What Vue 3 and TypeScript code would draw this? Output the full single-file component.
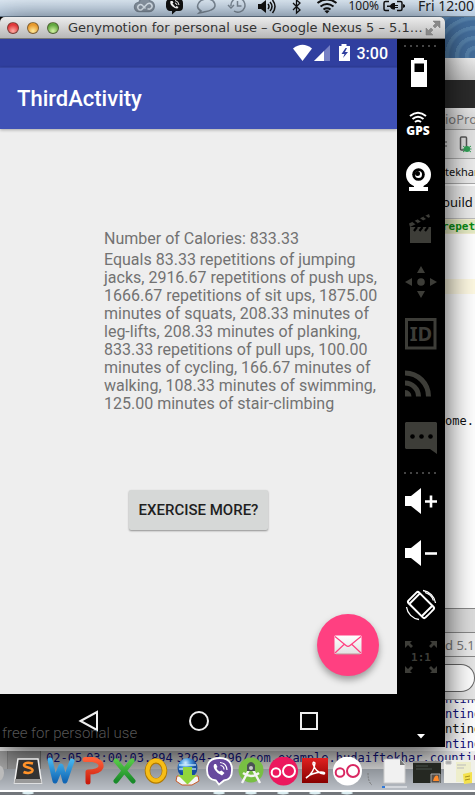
<script setup lang="ts">
interface LogRow {
  text: string
  tone: 'navy' | 'ink'
}

const calories = '833.33'
const summary: string[] = [
  'Equals 83.33 repetitions of jumping',
  'jacks, 2916.67 repetitions of push ups,',
  '1666.67 repetitions of sit ups, 1875.00',
  'minutes of squats, 208.33 minutes of',
  'leg-lifts, 208.33 minutes of planking,',
  '833.33 repetitions of pull ups, 100.00',
  'minutes of cycling, 166.67 minutes of',
  'walking, 108.33 minutes of swimming,',
  '125.00 minutes of stair-climbing',
]
const logRows: LogRow[] = [
  { text: 'nting', tone: 'navy' },
  { text: 'nting', tone: 'navy' },
  { text: 'nting', tone: 'ink' },
  { text: 'nting', tone: 'navy' },
]
</script>

<template>
  <div class="desktop">
    <!-- Editor window in the background -->
    <section class="ide">
      <div class="row back-title"></div>
      <div class="row back-dark"></div>
      <div class="row ide-title">ioPro</div>
      <div class="row ide-tools">
        <svg width="30" height="28" viewBox="0 0 30 28">
          <path d="M0 12h2M0 16h2" stroke="#999" stroke-width="2" />
          <rect x="15.500" y="7" width="6" height="13" rx="1" fill="#ddd" stroke="#555" stroke-width="1.500" />
          <circle cx="22" cy="19" r="3" fill="#2f9e54" />
          <path d="M18 16l8 6M18 22l8-6M17.500 19h9" stroke="#2f9e54" />
        </svg>
      </div>
      <div class="row ide-crumb">tekhar</div>
      <div class="row ide-tab">build</div>
      <div class="row ide-code"><span class="found">repet</span></div>
      <div class="row ide-blank"></div>
      <div class="row ide-caret"></div>
      <div class="row ide-editor">ome.</div>
      <div class="row ide-bar"></div>
      <div class="row ide-device">d 5.1</div>
      <div class="row ide-search"><span class="search-end"></span></div>
      <div class="log">
        <div class="log-rows">
          <div v-for="(row, i) in logRows" :key="i" class="row log-row" :class="row.tone">{{ row.text }}</div>
        </div>
        <div class="log-full">
          <span>02-05</span><span>03:00:03.894</span><span>3264-3296/com.example.hudaiftekhar.counting</span>
        </div>
      </div>
    </section>

    <header class="menubar">
      <svg class="menu-icons" width="212" height="16" viewBox="134 0 212 16">
        <g fill="none" stroke="#7a8794">
          <path d="M140 11.500a4.500 4.500 0 0 1 0-9 6 6 0 0 1 11-1.500 5.300 5.300 0 0 1-1 10.500z" stroke-width="1.500" fill="#8995a2" />
          <path d="M146.500 8.500l-3-3a2.700 2.700 0 1 0-1 4.300l6-6a2.900 2.900 0 1 1 0 4.800" stroke="#dce6ef" stroke-width="1.500" />
          <path d="M202 11c-7-4-2-12 6-12s11 8 4 11c-3 2-6 1-7 2l-5 1z" stroke-width="1.500" />
          <path d="M232 6a7 7 0 1 1 3 5M229 5l3 3 3-3M238.500 1v5h4" stroke-width="1.500" />
        </g>
        <path d="M170-1h10q4 0 4 4v4q0 4-4 4h-3l-4 3.500V11h-2q-3 0-4-4V3q0-3 3-4z" fill="#111" />
        <path d="M171.500 1q-1 3 2 5.500t5 2l1-1.500-2-1-1 1-3-3.500 1-1-1-1.500z" fill="#fff" />
        <path d="M176 .5q3.500.5 4 4.500M176 3q1.500 0 2 2" fill="none" stroke="#fff" />
        <path d="M259 4h3l5-4v13l-5-4h-3z" fill="#111" />
        <path d="M269 4q2 2.500 0 5M271 2q4 4.500 0 9M273.500 0q5 6.500 0 13" fill="none" stroke="#111" stroke-width="1.500" />
        <path d="M294 3l7 7-3.500 3V0l3.500 3-7 7" fill="none" stroke="#111" stroke-width="1.300" />
        <path d="M318.500 3q9.500-7 19 0M321.500 6.500q6.500-5 13 0M324.500 9.500q3.500-2.500 7 0" fill="none" stroke="#111" stroke-width="2" />
        <path d="M325.500 11l2.500 2.500 2.500-2.500q-2.500-1.500-5 0z" fill="#111" />
      </svg>
      <span class="percent">100%</span>
      <svg width="23" height="16" viewBox="0 0 23 16">
        <path d="M6 1.500H2.500q-1.500 0-1.500 1.500v6q0 1.500 1.500 1.500H6M14 1.500h3.500Q19 1.500 19 3v6q0 1.500-1.500 1.500H14" fill="none" stroke="#111" stroke-width="1.500" />
        <path d="M20 4l2 1v2l-2 1zM4 5.500h3q1-2 3-2.500h2v2h3v1h-3v1h3v1h-3v1.500h-2Q8 9 7 7H4z" fill="#111" />
      </svg>
      <time class="clock">Fri 12:00</time>
    </header>

    <main class="emulator">
      <div class="titlebar">
        <span class="lights"><i class="light red"></i><i class="light amber"></i><i class="light green"></i></span>
        <h1 class="window-title">Genymotion for personal use – Google Nexus 5 – 5.1…</h1>
        <svg width="16" height="16" viewBox="0 0 16 16">
          <path d="M8 1h7v7l-2.500-2.500-2.500 2.500L8 6l2.500-2.500zM8 15H1V8l2.500 2.500L6 8l2 2-2.500 2.500z" fill="#888" stroke="#777" stroke-width=".5" />
        </svg>
      </div>

      <div class="window-body">
        <div class="phone">
          <div class="statusbar">
            <svg width="60" height="18" viewBox="0 0 60 18">
              <path d="M0 4.500Q9.500-3 19 4.500L9.500 17z" fill="#fff" />
              <path d="M37 1v16H21z" fill="#7680c4" />
              <path d="M31 7v10H21z" fill="#fff" />
              <path d="M48.500 0h5v2H57v15H46V2h2.500z" fill="#fff" />
              <path d="M52.500 4l-4 6h3l-1.500 4 5-6h-3l2-4z" fill="#303f9f" />
            </svg>
            <span>3:00</span>
          </div>
          <div class="appbar"><h2>ThirdActivity</h2></div>
          <div class="content">
            <div class="result">
              <p class="total">Number of Calories: {{ calories }}</p>
              <p><template v-for="(line, i) in summary" :key="i">{{ line }}<br></template></p>
            </div>
            <button type="button" class="more">EXERCISE MORE?</button>
            <button type="button" class="fab" aria-label="Mail">
              <svg width="28" height="20" viewBox="0 0 28 20">
                <defs>
                  <linearGradient id="paper" x1="0" y1="0" x2="0" y2="1">
                    <stop offset="0" stop-color="#fff" /><stop offset="1" stop-color="#e2e2e2" />
                  </linearGradient>
                </defs>
                <rect x=".5" y=".5" width="27" height="18.500" rx="1" fill="url(#paper)" />
                <path d="M1 1.500L12 10.500q2 1.600 4 0L27 1.500M1 18l9-8.500M27 18l-9-8.500" fill="none" stroke="#ff4081" stroke-width="1.200" />
                <path d="M2 19h24" stroke="#b99" />
              </svg>
            </button>
          </div>
        </div>

        <nav class="tools">
          <div class="dots top"></div>
          <button type="button" aria-label="Battery">
            <svg viewBox="0 0 48 52"><path d="M17 11h10v2h3v27H14V13h3z" fill="#fff" /><path d="M17.500 16.500H27V25h-9.500z" fill="#000" /></svg>
          </button>
          <button type="button" aria-label="Location">
            <svg viewBox="0 0 48 52">
              <path d="M13 17q8-6.500 16 0M15.500 20q5.500-4.500 11 0M18 23q3-2.500 6 0" fill="none" stroke="#fff" stroke-width="2" />
              <text x="21" y="36" text-anchor="middle" class="gps">GPS</text>
            </svg>
          </button>
          <button type="button" aria-label="Camera">
            <svg viewBox="0 0 48 52">
              <path d="M17 33h9.500v3H31v4H12v-4h5z" fill="#fff" />
              <circle cx="21.500" cy="23.500" r="12.500" fill="#fff" /><circle cx="21.500" cy="23.500" r="6.300" fill="#000" />
              <circle cx="21.500" cy="23.500" r="3.500" fill="#fff" /><circle cx="20.500" cy="22.500" r="2.500" fill="#000" />
            </svg>
          </button>
          <button type="button" aria-label="Record">
            <svg viewBox="0 0 48 52" fill="#3d3d38">
              <path d="M13 24h21v16H13zM12 20.500l20-9.500 1 3-20 10z" />
              <path d="M16 18l4 3M21.500 15.500l4 3M27 13l4 3M17 28l3-4M22.500 28l3-4M28 28l3-4" stroke="#000" stroke-width="2.200" />
            </svg>
          </button>
          <button type="button" aria-label="Move">
            <svg viewBox="0 0 48 52" fill="#3d3d38">
              <circle cx="24" cy="27" r="3.800" /><path d="M24 11l4 7h-8zM24 43l4-7h-8zM8 27l7-4v8zM40 27l-7-4v8z" />
            </svg>
          </button>
          <button type="button" aria-label="Identifiers">
            <svg viewBox="0 0 48 52">
              <rect x="9.500" y="12.500" width="28.500" height="28.500" fill="none" stroke="#3d3d38" stroke-width="3" />
              <text x="24" y="34" text-anchor="middle" class="ident">ID</text>
            </svg>
          </button>
          <button type="button" aria-label="Network">
            <svg viewBox="0 0 48 52">
              <path d="M8 31q6 .5 6.500 6.500H8z" fill="#3d3d38" />
              <path d="M8 24a13.500 13.500 0 0 1 13.500 13.500M8 14a23.500 23.500 0 0 1 23.500 23.500" fill="none" stroke="#3d3d38" stroke-width="5" />
            </svg>
          </button>
          <button type="button" aria-label="Messages">
            <svg viewBox="0 0 48 52">
              <path d="M9 11h30l1 1v31l-7-5H9l-1-1V12z" fill="#3d3d38" />
              <g fill="#000"><circle cx="15.500" cy="25.500" r="2.300" /><circle cx="24.500" cy="25.500" r="2.300" /><circle cx="33.500" cy="25.500" r="2.300" /></g>
            </svg>
          </button>
          <div class="dots"></div>
          <button type="button" aria-label="Volume up">
            <svg viewBox="0 0 48 52"><path d="M8 21h6l10-8v26l-10-8H8z" fill="#fff" /><path d="M28 26.500h12M34 20.500v12" stroke="#fff" stroke-width="2.600" /></svg>
          </button>
          <button type="button" aria-label="Volume down">
            <svg viewBox="0 0 48 52"><path d="M8 21h6l10-8v26l-10-8H8z" fill="#fff" /><path d="M28 26.500h12" stroke="#fff" stroke-width="2.600" /></svg>
          </button>
          <button type="button" aria-label="Rotate">
            <svg viewBox="0 0 48 52" fill="none" stroke="#fff">
              <g transform="rotate(-45 24 26)">
                <rect x="16.500" y="14" width="15" height="24" rx="2" stroke-width="2" />
                <path d="M16.500 17h15M16.500 34.500h15" stroke-width="2" /><path d="M21 36.500h6" stroke="#000" />
              </g>
              <path d="M26 11.500A14.500 14.500 0 0 1 38.500 24M28 13.500a13 13 0 0 1 8.500 8M22 40.500A14.500 14.500 0 0 1 9.500 28" stroke-width="1.300" />
            </svg>
          </button>
          <button type="button" aria-label="Pixel perfect">
            <svg viewBox="0 0 48 52" fill="#3d3d38">
              <path d="M8 10h7l-2 2 3 3-2 2-3-3-3 3zM40 10h-7l2 2-3 3 2 2 3-3 3 3zM8 42h7l-2-2 3-3-2-2-3 3-3-3zM40 42h-7l2-2-3-3 2-2 3 3 3-3z" />
              <text x="24" y="30" text-anchor="middle" class="ratio">1:1</text>
            </svg>
          </button>
        </nav>
      </div>

      <footer class="navbar">
        <div class="keys">
          <button type="button" aria-label="Back"><svg viewBox="0 0 24 24"><path d="M3.500 12L20 3v18z" /></svg></button>
          <button type="button" aria-label="Home"><svg viewBox="0 0 24 24"><circle cx="12" cy="12" r="9" /></svg></button>
          <button type="button" aria-label="Recents"><svg viewBox="0 0 24 24"><path d="M4 4h16v16H4z" /></svg></button>
        </div>
        <span class="watermark">free for personal use</span>
        <span class="more-arrow"><svg width="8" height="5" viewBox="0 0 8 5"><path d="M0 0h8L4 4.500z" fill="#fff" /></svg></span>
      </footer>
    </main>

    <footer class="dock">
      <svg class="dock-icons" width="475" height="38" viewBox="0 0 475 38">
        <defs>
          <linearGradient id="blue" x1="0" y1="0" x2="0" y2="1"><stop offset="0" stop-color="#45b5ef" /><stop offset="1" stop-color="#1267b5" /></linearGradient>
          <linearGradient id="red" x1="0" y1="0" x2="0" y2="1"><stop offset="0" stop-color="#ff6038" /><stop offset="1" stop-color="#c91b0c" /></linearGradient>
          <linearGradient id="leaf" x1="0" y1="0" x2="0" y2="1"><stop offset="0" stop-color="#55c745" /><stop offset="1" stop-color="#188a2a" /></linearGradient>
          <radialGradient id="globe" cx=".4" cy=".25"><stop offset="0" stop-color="#d5efff" /><stop offset=".5" stop-color="#4b9ade" /><stop offset="1" stop-color="#174e9d" /></radialGradient>
          <linearGradient id="pdf" x1="0" y1="0" x2="0" y2="1"><stop offset="0" stop-color="#e02020" /><stop offset="1" stop-color="#870000" /></linearGradient>
        </defs>
        <ellipse cx="-2" cy="16" rx="6" ry="8" fill="#bbb" />
        <!-- Text editor -->
        <path d="M18 2h20l3.500 24h-27z" fill="#333" stroke="#eee" stroke-width="1.500" />
        <path d="M15 22h26l.5 4h-27z" fill="#999" />
        <path d="M33 6.500q-8-2-9 1.500c0 3 9 2 8.500 5.500-1 3.500-7 2.500-9 1.500" fill="none" stroke="#ff9229" stroke-width="2.600" />
        <!-- Office -->
        <path d="M50 3l5 21 6-15 4 15 7-20" fill="none" stroke="url(#blue)" stroke-width="5" stroke-linecap="round" stroke-linejoin="round" />
        <path d="M85 2.500h8q9 2 8 7.500-2 5-13 5v10" fill="none" stroke="url(#red)" stroke-width="5" stroke-linecap="round" stroke-linejoin="round" />
        <path d="M116 4l17 20M132 4l-16 20" fill="none" stroke="url(#leaf)" stroke-width="5" stroke-linecap="round" />
        <ellipse cx="156" cy="14" rx="8.500" ry="10" fill="none" stroke="#b27a00" stroke-width="5.500" />
        <ellipse cx="156" cy="13.500" rx="8.500" ry="10" fill="none" stroke="#f6bd17" stroke-width="4" />
        <!-- Downloader -->
        <path d="M177 19h21l1 5-7 4h-10l-6-4z" fill="#f5f5f5" stroke="#c85a28" />
        <circle cx="187.500" cy="11" r="10" fill="url(#globe)" />
        <path d="M179 8h17M179 12h17" stroke="#d6f2ff" stroke-width="2" opacity=".6" />
        <path d="M183 10h9v8h5l-9.500 9.500L178 18h5z" fill="#91d63b" />
        <!-- Viber -->
        <path d="M207 13q0-12 12.500-12T232 13q0 10-8 10.500l-5 4-3-4q-9-1-9-10.500z" fill="#67489e" stroke="#fff" stroke-width="1.800" />
        <path d="M214.500 7q-2 2 .5 6t7 5.500l2.500-2.500-3-2.500-2 1q-2.500-1.500-3-3.500l1-1-1.500-3z" fill="#fff" />
        <path d="M220 5.500q6.500.5 7 7.500M220.500 8.500q3.500.5 3.500 4" fill="none" stroke="#fff" stroke-width="1.200" />
        <!-- Android Studio -->
        <circle cx="251" cy="13" r="12.500" fill="#78bf43" />
        <path d="M251 9l-9 17M251 9l9 17M243 16q8 6 16 0" fill="none" stroke="#f4f4f4" stroke-width="2.400" />
        <path d="M247 8q4-6 8 0v6h-8z" fill="#4b5354" /><circle cx="251" cy="11" r="2" fill="#ccc" />
        <!-- Genymotion -->
        <circle cx="283.500" cy="14" r="14.500" fill="#ec185e" />
        <g fill="none" stroke="#fff" stroke-width="2"><circle cx="276" cy="15.500" r="4.300" /><circle cx="289" cy="14" r="6" /></g>
        <!-- PDF reader -->
        <path d="M302 1h26v25h-26z" fill="url(#pdf)" />
        <path d="M306 21q8-5 9-15-2-2-2 1 3 9 11 10 2-2-3-2-9 1-14 5z" fill="none" stroke="#fff" stroke-width="1.500" />
        <circle cx="347.500" cy="14" r="14.500" fill="#fff" />
        <g fill="none" stroke="#d92862" stroke-width="2"><circle cx="340" cy="15.500" r="4.300" /><circle cx="353" cy="14" r="6" /></g>
        <path d="M368 16q0 9 4 12" stroke="#777" fill="none" stroke-dasharray="2 1" />
        <!-- Document stack -->
        <path d="M386 2h14l5 5v19h-21V3z" fill="#f1f1f1" stroke="#ccc" />
        <path d="M400 2v6h5z" fill="#777" />
        <path d="M383 30h24" stroke="#d4d7dc" stroke-width="2" /><path d="M382 30h3" stroke="#3179d8" stroke-width="2" />
        <!-- Minimised windows -->
        <path d="M413 4h28v22h-28z" fill="#252822" /><path d="M413 4h28v2h-28z" fill="#888" />
        <path d="M416 9h12M416 12h16" stroke="#49504a" />
        <path d="M431 17h9v9h-9z" fill="#56504b" stroke="#aaa" /><path d="M433 24q2-7 5-5l1 5z" fill="#ff8a2b" />
        <path d="M444 3h31v23h-31z" fill="#f0f0ea" /><path d="M456 5h15v20h-15z" fill="#eeeecb" />
        <path d="M446 4h5v3h-5zM457 8h9M457 11h7" fill="#aaa" stroke="#bbb" />
        <path d="M463 17l9-2v11l-8 1z" fill="#f4e14d" /><path d="M465 20l5-1M465 23l5-1" stroke="#a89220" />
        <g fill="#e8fbff" opacity=".9"><ellipse cx="28" cy="36" rx="6" ry="1.500" /><ellipse cx="219" cy="36" rx="6" ry="1.500" /><ellipse cx="251" cy="36" rx="6" ry="1.500" /><ellipse cx="283" cy="36" rx="6" ry="1.500" /><ellipse cx="315" cy="36" rx="6" ry="1.500" /><ellipse cx="347" cy="36" rx="6" ry="1.500" /></g>
      </svg>
    </footer>
  </div>
</template>

<style>
body { margin: 0; }
</style>

<style scoped>
* { box-sizing: border-box; }
.desktop {
  position: relative;
  display: flex;
  flex-direction: column;
  min-height: 100vh;
  overflow: hidden;
  background: repeating-radial-gradient(circle at 100% 56px, #436d9b 0 5px, #5580a9 7px 10px);
}

/* Background editor */
.ide {
  position: absolute;
  inset: 58px 0 0 0;
  display: flex;
  flex-direction: column;
  background: #ececec;
  font: 12px "DejaVu Sans Mono", monospace;
  color: #111;
  overflow: hidden;
}
.row {
  display: flex;
  flex: none;
  align-items: center;
  padding-left: calc(100% - 30px);
  white-space: nowrap;
}
.back-title { height: 22px; background: linear-gradient(#eee, #c9c9c9); }
.back-dark { height: 28px; background: #2b2b2b; }
.ide-title { height: 22px; background: linear-gradient(#e8e8e8, #cfcfcf); border-bottom: 1px solid #999; font: 13px "Noto Sans", sans-serif; color: #777; }
.ide-tools { height: 29px; border-bottom: 1px solid #aaa; background: #e2e2e2; }
.ide-crumb { height: 25px; border-bottom: 1px solid #aaa; font: 11px "Noto Sans", sans-serif; }
.ide-tab { height: 35px; padding-left: calc(100% - 33px); font: 13px "Noto Sans", sans-serif; border-top: 2px solid #fff; border-bottom: 1px solid #bbb; }
.ide-code { height: 15px; padding-left: calc(100% - 33px); background: #f4f0d0; font-size: 11px; }
.found { color: #078a13; font-weight: bold; background: #e6ecc4; }
.ide-blank { height: 45px; background: #fff; }
.ide-caret { height: 15px; background: #fffae3; }
.ide-editor { flex: 1; background: #fff; padding-bottom: 60px; border-bottom: 1px solid #888; }
.ide-bar { height: 24px; background: #ddd; border-bottom: 1px solid #888; }
.ide-device { height: 24px; border-bottom: 1px solid #888; font: 13px "Noto Sans", sans-serif; color: #777; }
.ide-search { height: 43px; border-bottom: 1px solid #999; background: #e6e6e6; }
.search-end { flex: 1; height: 28px; border: 1px solid #666; border-left: 0; border-radius: 0 14px 14px 0; background: #fff; }
.log { flex: none; background: #fff; }
.log-rows { display: flex; flex-direction: column; justify-content: flex-end; height: 51px; overflow: hidden; }
.log-row { height: 15px; }
.navy { color: #11117c; }
.log-full {
  display: flex;
  gap: 4px;
  height: 44px;
  padding-left: 46px;
  line-height: 15px;
  background: linear-gradient(90deg, #aaa 0 7px, #888 7px 8px, #999 8px 40px, #777 40px 41px, #aaa 41px, #eee);
  color: #11117c;
  white-space: nowrap;
}

/* System menu bar */
.menubar {
  position: relative;
  display: flex;
  flex: none;
  justify-content: flex-end;
  height: 17px;
  background: linear-gradient(#dce8f3, #b9cde2);
  border-bottom: 1px solid #6b7f93;
  font: 12px/12px "Noto Sans", sans-serif;
  color: #222;
  white-space: nowrap;
}
.menu-icons { flex: none; margin-right: 3px; }
.percent { margin-right: 4px; }
.clock { width: 57px; margin-left: 12px; overflow: hidden; font-size: 14px; }

/* Emulator window */
.emulator {
  position: relative;
  display: flex;
  flex: 1;
  flex-direction: column;
  margin-right: 30px;
  border-radius: 0 5px 0 0;
  box-shadow: 0 8px 32px rgba(0, 0, 0, .75);
  background: #000;
}
.titlebar {
  display: flex;
  align-items: center;
  height: 22px;
  padding: 0 4px 0 7px;
  border-radius: 5px 5px 0 0;
  background: linear-gradient(#ececec, #b8b8b8);
  border-bottom: 1px solid #777;
}
.lights { display: flex; gap: 8px; margin-right: 9px; }
.light { width: 12px; height: 12px; border-radius: 50%; border: 1px solid rgba(60, 50, 40, .6); }
.red { background: radial-gradient(circle at 50% 80%, #ffb0a8, #e0393b 65%); }
.amber { background: radial-gradient(circle at 50% 80%, #ffeb9c, #e79a2e 65%); }
.green { background: radial-gradient(circle at 50% 80%, #d5f5a5, #62a840 65%); }
.window-title { flex: 1; margin: 0; font: 13px/20px "DejaVu Sans", sans-serif; color: #333; white-space: nowrap; }
.window-body { display: flex; flex: 1; }
.phone { display: flex; flex: 1; flex-direction: column; background: #eee; font-family: Roboto, sans-serif; }
.statusbar {
  display: flex;
  align-items: center;
  justify-content: flex-end;
  gap: 4px;
  height: 28px;
  padding-right: 9px;
  background: #303f9f;
  color: #fff;
  font-size: 16px;
  font-weight: 500;
}
.appbar {
  display: flex;
  align-items: center;
  height: 62px;
  padding-left: 17px;
  background: #3f51b5;
  border-top: 1px solid #35459f;
  box-shadow: 0 1px 3px rgba(0, 0, 0, .3);
  color: #fff;
}
.appbar h2 { margin: 0; font-size: 22px; font-weight: 500; }
.content { position: relative; display: flex; flex: 1; flex-direction: column; align-items: center; padding-top: 101px; }
.result { align-self: stretch; padding-left: 104px; font-size: 16px; line-height: 18px; color: #727272; white-space: nowrap; }
.result p { margin: 0; }
.result .total { margin-bottom: 3px; }
.more {
  height: 40px;
  margin-top: 77px;
  padding: 0 10px;
  border: 0;
  border-radius: 2px;
  background: #d6d8d7;
  box-shadow: 0 1px 2px rgba(0, 0, 0, .4);
  font: 500 15px Roboto, sans-serif;
  color: #1f1f1f;
}
.fab {
  position: absolute;
  right: 18px;
  bottom: 18px;
  display: flex;
  align-items: center;
  justify-content: center;
  width: 62px;
  height: 62px;
  padding: 0;
  border: 0;
  border-radius: 50%;
  background: #ff4081;
  box-shadow: 0 4px 7px rgba(0, 0, 0, .35);
}

/* Emulator tool strip */
.tools { flex: none; width: 48px; background: #000; }
.tools button { display: block; width: 48px; height: 52px; padding: 0; border: 0; background: none; }
.tools svg { display: block; width: 48px; height: 52px; }
.dots { height: 12px; margin: 0 8px 0 6px; background: radial-gradient(circle at 2px 10px, #444 0 1px, transparent 1px) 0 0 / 6px 12px; }
.dots.top { height: 8px; background-position: 0 -3px; }
.gps { font: 800 12px "Open Sans", sans-serif; fill: #fff; }
.ident { font: bold 20px "Noto Sans", sans-serif; fill: #3d3d38; }
.ratio { font: bold 11px "DejaVu Sans Mono", monospace; fill: #3d3d38; }

.navbar { position: relative; height: 53px; padding-right: 48px; }
.keys { display: flex; justify-content: center; height: 53px; }
.keys button { width: 110px; padding: 0; border: 0; background: none; }
.keys svg { display: block; width: 24px; height: 24px; margin: auto; fill: none; stroke: #eee; stroke-width: 2px; }
.watermark { position: absolute; left: 2px; bottom: 4px; font: 300 15px/20px Roboto, sans-serif; color: #555; }
.more-arrow { position: absolute; right: 20px; bottom: 8px; display: flex; }

.dock {
  position: relative;
  flex: none;
  height: 38px;
  margin-top: 10px;
  background: linear-gradient(transparent 0 12px, #8f949a 12px, #b9bec5 33px, #fff 33px 35px, #72767b 35px);
}
.dock-icons { display: block; }
</style>
